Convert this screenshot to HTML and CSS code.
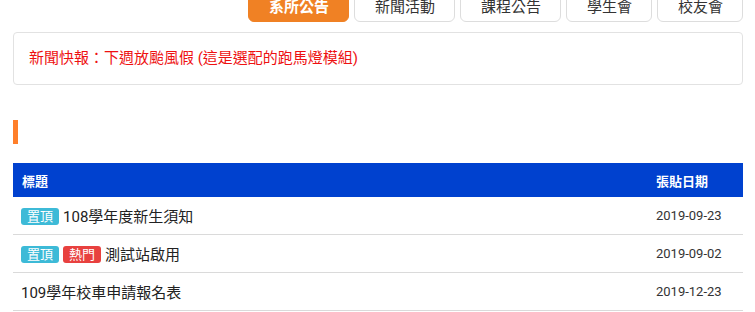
FILE: index.html
```html
<!DOCTYPE html>
<html lang="zh-Hant">
<head>
    <meta charset="UTF-8">
    <meta name="viewport" content="width=device-width, initial-scale=1.0">
    <title>系所公告</title>
    <link rel="stylesheet" href="styles.css">
</head>
<body>
    <div class="page">
        <ul class="tabs">
            <li class="tab active">系所公告</li>
            <li class="tab">新聞活動</li>
            <li class="tab">課程公告</li>
            <li class="tab">學生會</li>
            <li class="tab">校友會</li>
        </ul>
        <div class="marquee">新聞快報：下週放颱風假 (這是選配的跑馬燈模組)</div>
        <h2 class="section-title"></h2>
        <table class="news">
            <thead>
                <tr><th>標題</th><th class="date-col">張貼日期</th></tr>
            </thead>
            <tbody>
                <tr>
                    <td><span class="badge top">置頂</span><span class="title">108學年度新生須知</span></td>
                    <td class="date">2019-09-23</td>
                </tr>
                <tr>
                    <td><span class="badge top">置頂</span><span class="badge hot">熱門</span><span class="title">測試站啟用</span></td>
                    <td class="date">2019-09-02</td>
                </tr>
                <tr>
                    <td><span class="title">109學年校車申請報名表</span></td>
                    <td class="date">2019-12-23</td>
                </tr>
            </tbody>
        </table>
    </div>
</body>
</html>
```

FILE: styles.css
```css
body {
    margin: 0;
    background-color: #fff;
    color: #222;
    font-family: Roboto, "Noto Sans CJK TC", sans-serif;
}
.page {
    margin-top: -8px;
    padding: 0 12px 0 13px;
}
.tabs {
    display: flex;
    justify-content: flex-end;
    gap: 5px;
    list-style: none;
    margin: 0;
    padding: 0;
}
.tab {
    height: 28px;
    line-height: 28px;
    padding: 0 19px 0 20px;
    font-size: 15px;
    color: #333;
    background-color: #fff;
    border: 1px solid #ddd;
    border-radius: 6px;
}
.tab.active {
    background-color: #f08124;
    border-color: #f08124;
    color: #fff;
    font-weight: bold;
}
.marquee {
    margin-top: 10px;
    padding: 15px 15px 16px;
    line-height: 20px;
    font-size: 15px;
    color: #ee1111;
    border: 1px solid #e2e2e2;
    border-radius: 4px;
}
.section-title {
    margin: 35px 0 19px;
    height: 24px;
    width: 0;
    border-left: 5px solid #ff7f2a;
}
.news {
    width: 100%;
    border-collapse: collapse;
}
.news th {
    height: 34px;
    padding: 0 9px;
    text-align: left;
    font-size: 13px;
    color: #fff;
    background-color: #0041cf;
}
.news th.date-col {
    width: 78px;
}
.news td {
    height: 37px;
    padding: 0 8px;
    border-bottom: 1px solid #dadada;
    font-size: 15px;
    color: #222;
}
.news td.date {
    padding: 0 9px;
    font-size: 13px;
    color: #333;
}
.badge {
    display: inline-block;
    padding: 0 6px;
    margin-right: 4px;
    line-height: 17px;
    font-size: 13px;
    color: #fff;
    border-radius: 3px;
    vertical-align: 1px;
}
.badge.top {
    background-color: #3dbad7;
}
.badge.hot {
    background-color: #e8413f;
}
```
